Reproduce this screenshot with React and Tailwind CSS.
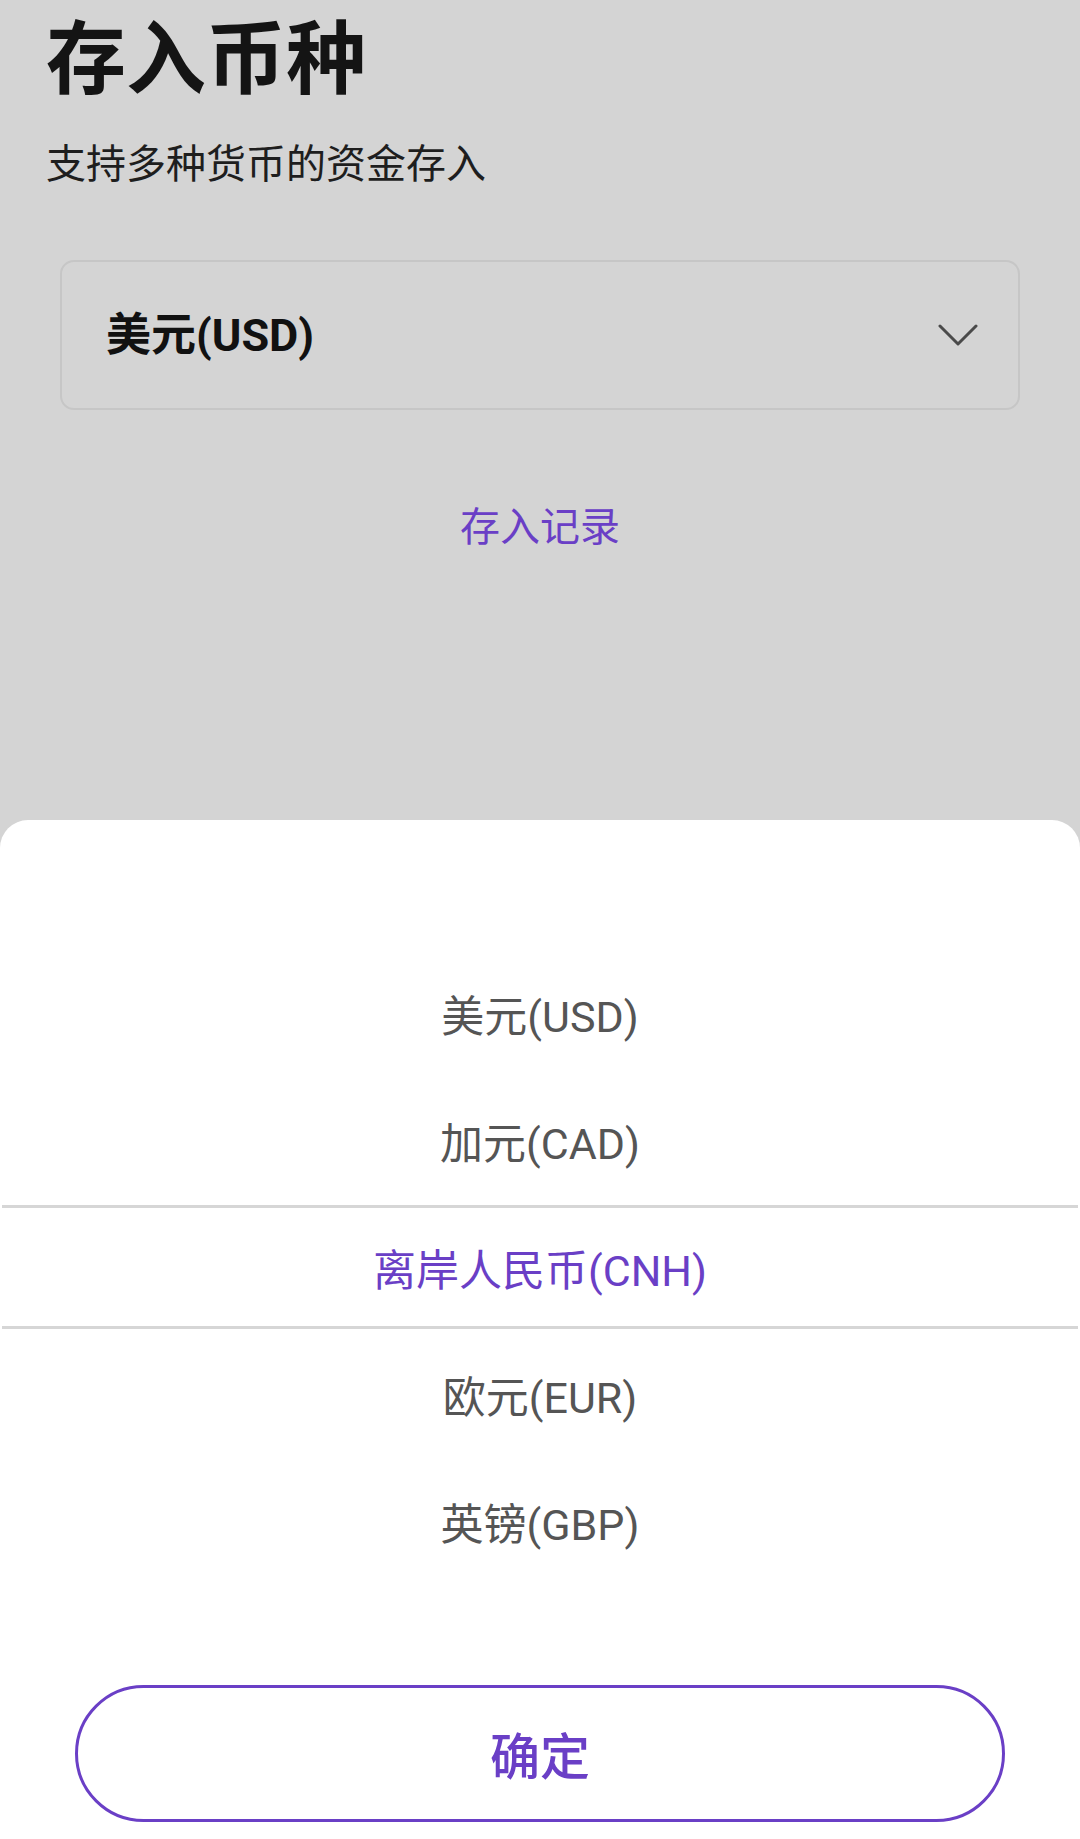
import React, { useState } from "react";

const currencies = ["美元(USD)", "加元(CAD)", "离岸人民币(CNH)", "欧元(EUR)", "英镑(GBP)"];

const font = { fontFamily: '"Roboto", "Noto Sans CJK SC", sans-serif' };

const App = () => {
  const [selected] = useState(2);

  return (
    <div className="w-[1080px] h-[1839px] flex flex-col bg-[#d4d4d4] overflow-hidden" style={font}>
      {/* Page behind the sheet */}
      <div className="h-[820px] shrink-0 flex flex-col">
        <div className="h-[120px] flex items-center pl-[46px]">
          <h1 className="text-[80px] leading-none font-bold text-[#141414]">存入币种</h1>
        </div>
        <div className="h-[90px] flex items-center pl-[46px]">
          <p className="text-[40px] leading-none text-[#1e1e1e]">支持多种货币的资金存入</p>
        </div>

        {/* Currency select */}
        <div className="mt-[50px] mx-[60px] h-[150px] rounded-[14px] border-2 border-[#c6c6c6] flex items-center justify-between pl-[44px] pr-[40px]">
          <span className="text-[45px] leading-none font-bold text-[#111]">美元(USD)</span>
          <svg width="40" height="24" viewBox="0 0 40 24" fill="none">
            <path d="M2 3l18 18L38 3" stroke="#4a4a4a" strokeWidth="3" strokeLinecap="round" strokeLinejoin="round" />
          </svg>
        </div>

        <div className="mt-[88px] h-[60px] flex items-center justify-center">
          <a href="#" className="text-[40px] leading-none text-[#6a3fc6]">存入记录</a>
        </div>
      </div>

      {/* Bottom sheet */}
      <div className="flex-1 bg-white rounded-t-[28px] flex flex-col pt-[134px] pb-[17px]">
        <div className="relative">
          {currencies.map((c, i) => (
            <div key={c} className="h-[127px] flex items-center justify-center">
              <span
                className={`text-[43px] leading-none ${
                  i === selected ? "text-[#6a3fc6]" : "text-[#555555]"
                }`}
              >
                {c}
              </span>
            </div>
          ))}
          {/* picker highlight lines */}
          <div className="absolute left-[2px] right-[2px] top-[251px] h-[3px] bg-[#d6d6d6]" />
          <div className="absolute left-[2px] right-[2px] top-[372px] h-[3px] bg-[#d6d6d6]" />
        </div>

        <div className="mt-auto px-[75px]">
          <button className="w-full h-[137px] rounded-full border-[3px] border-[#6a3fc6] bg-white flex items-center justify-center">
            <span className="mt-[8px] text-[50px] leading-none font-medium text-[#6a3fc6]">确定</span>
          </button>
        </div>
      </div>
    </div>
  );
};

export default App;
